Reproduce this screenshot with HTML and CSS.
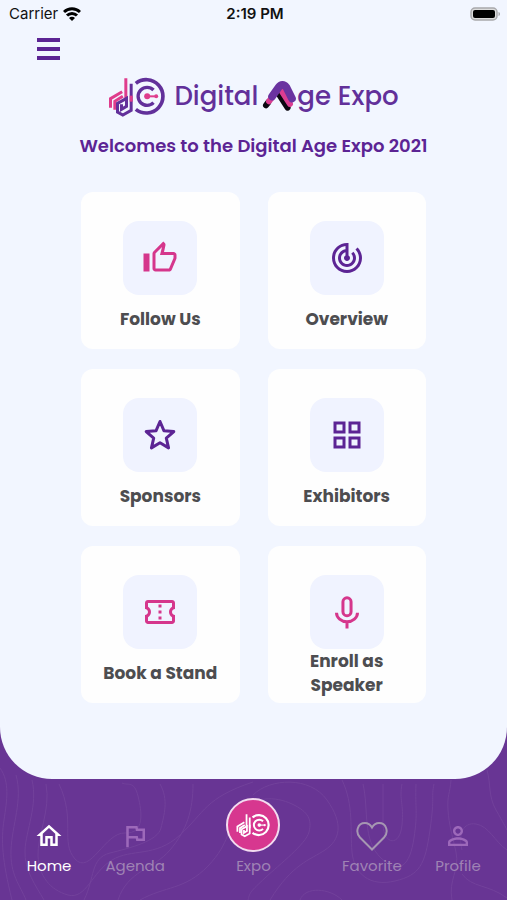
FILE: index.html
```html
<!DOCTYPE html>
<html lang="en">
<head>
    <meta charset="utf-8">
    <meta name="viewport" content="width=device-width, initial-scale=1">
    <title>Digital Age Expo</title>
    <link rel="stylesheet" href="styles.css">
</head>
<body>
    <!-- shared logo mark, coloured through css variables -->
    <svg class="defs" aria-hidden="true">
        <symbol id="mark" viewBox="26 22 176 120">
            <g fill="none" stroke-width="9">
                <path class="mark-b" d="M33 114V87L68 66M46 120V95L70 80M79 26V86"/>
                <path class="mark-a" d="M95 42V122L70 136L54 127V101L81 86V110L66 119V104"/>
                <path class="mark-b" d="M95 96V78"/>
                <path class="mark-a" d="M109 41A50 50 0 1 1 109 119" stroke-width="11"/>
                <path class="mark-a" d="M162 61A27 27 0 1 0 162 99" stroke-width="10"/>
                <path class="mark-b" d="M143 80H166" stroke-width="6"/>
            </g>
            <circle class="mark-dot" cx="143" cy="80" r="9"/>
            <circle class="mark-dot" cx="170" cy="80" r="6"/>
        </symbol>
    </svg>

    <div class="app">
        <svg class="contours" viewBox="0 0 507 200" preserveAspectRatio="none" aria-hidden="true">
            <path d="M0 68C10 82 7 100 4 120S2 160 12 200"/>
            <path d="M16 75C23 100 12 125 11 150S20 185 26 200"/>
            <path d="M32 80C38 105 26 130 25 150S36 186 44 200"/>
            <path d="M46 84C51 110 37 136 38 156S50 190 68 195S92 172 112 160S155 158 180 135S205 98 253 82"/>
            <path d="M59 84C76 120 60 142 75 159S105 132 125 133S142 112 138 96S128 86 122 83"/>
            <path d="M160 84C169 100 164 115 161 128S130 148 110 153S95 178 84 200"/>
            <path d="M193 84C193 110 187 130 170 150S128 170 118 200"/>
            <path d="M140 200C165 186 185 190 208 166S226 128 240 112S275 96 292 104S312 120 309 132S280 164 265 178S250 192 248 200"/>
            <path d="M253 95C270 78 310 76 327 100S340 140 325 150S292 164 270 200"/>
            <path d="M300 200C305 186 330 188 342 200"/>
            <path d="M342 80C354 105 350 130 352 152S370 187 395 181S425 165 430 130S431 98 434 84"/>
            <path d="M363 84C369 110 362 140 381 158S410 165 414 138S415 110 416 84"/>
            <path d="M383 84V125C384 145 400 147 402 125S399 100 402 84"/>
            <path d="M452 200C448 180 460 170 456 152S449 125 448 110S450 94 451 80"/>
            <path d="M487 70C491 84 488 96 496 110S505 126 507 130"/>
            <path d="M462 150C458 134 463 122 476 124S495 142 507 150"/>
            <path d="M462 174C472 188 488 184 507 198"/>
        </svg>

        <main class="panel">
            <div class="status">
                <span class="carrier">Carrier
                    <svg width="18" height="14" viewBox="0 0 18 14" fill="none" stroke="#000" stroke-width="3" aria-hidden="true">
                        <path d="M1 5a11.500 11.500 0 0 1 16 0M4 8.500a7 7 0 0 1 10 0"/>
                        <path d="M9 14L6 11a4 4 0 0 1 6 0z" fill="#000" stroke="none"/>
                    </svg>
                </span>
                <span class="time">2:19 PM</span>
                <svg class="battery" width="31" height="14" viewBox="0 0 31 14" aria-hidden="true">
                    <rect x="1" y="1" width="26" height="12" rx="4" fill="#dcdcdc" stroke="#a9a9ac" stroke-width="1.500"/>
                    <rect x="3" y="3" width="22" height="8" rx="2"/>
                    <path d="M28.500 5v4c2-.5 2-3.500 0-4z" fill="#a9a9ac"/>
                </svg>
            </div>

            <button class="menu" type="button" aria-label="Menu">
                <svg width="23" height="22" viewBox="0 0 23 22" aria-hidden="true">
                    <path d="M0 0h23v4H0zM0 9h23v4H0zM0 18h23v4H0z" fill="currentColor"/>
                </svg>
            </button>

            <div class="logo">
                <svg class="logo-mark" aria-hidden="true"><use href="#mark"/></svg>
                <span class="logo-word">Digital</span>
                <svg class="logo-a" viewBox="20 22 104 98" role="img" aria-label="A">
                    <g fill="none" stroke-linecap="round" stroke-linejoin="round">
                        <path stroke="#0b0710" stroke-width="18" d="M32 100L38 92M72 70L96 107"/>
                        <path stroke="#db3d91" stroke-width="18" d="M41 88L56 68M80 60L103 96"/>
                        <path stroke="#6a33a0" stroke-width="23" d="M50 74L69 47Q81 32 92 46L109 80"/>
                    </g>
                </svg>
                <span class="logo-word">ge Expo</span>
            </div>

            <h1 class="welcome">Welcomes to the Digital Age Expo 2021</h1>

            <div class="cards">
                <a class="card" href="#follow">
                    <span class="tile pink">
                        <svg viewBox="0 0 24 24" aria-hidden="true"><path d="M9 21h9c.83 0 1.540-.5 1.840-1.220l3.020-7.050c.09-.23.14-.47.14-.73v-2c0-1.100-.9-2-2-2h-6.310l.95-4.570.03-.32c0-.41-.17-.79-.44-1.060L14.170 1 7.580 7.590C7.220 7.950 7 8.450 7 9v10c0 1.100.9 2 2 2zM9 9l4.340-4.340L12 10h9v2l-3 7H9V9zM1 9h4v12H1z"/></svg>
                    </span>
                    <span class="label">Follow Us</span>
                </a>
                <a class="card" href="#overview">
                    <span class="tile">
                        <svg viewBox="0 0 24 24" aria-hidden="true"><path d="M19.070 4.930l-1.410 1.410C19.100 7.790 20 9.790 20 12c0 4.420-3.580 8-8 8s-8-3.580-8-8c0-4.080 3.050-7.440 7-7.930v2.020C8.160 6.570 6 9.030 6 12c0 3.310 2.690 6 6 6s6-2.690 6-6c0-1.660-.67-3.160-1.760-4.240l-1.410 1.410C15.550 9.900 16 10.900 16 12c0 2.210-1.790 4-4 4s-4-1.790-4-4c0-1.860 1.280-3.410 3-3.860v2.140c-.6.35-1 .98-1 1.720 0 1.100.9 2 2 2s2-.9 2-2c0-.74-.4-1.380-1-1.720V2h-1C6.480 2 2 6.480 2 12s4.480 10 10 10 10-4.480 10-10c0-2.760-1.120-5.260-2.930-7.070z"/></svg>
                    </span>
                    <span class="label">Overview</span>
                </a>
                <a class="card" href="#sponsors">
                    <span class="tile">
                        <svg class="line" viewBox="0 0 24 24" aria-hidden="true"><path stroke-linejoin="round" d="M12 3L14.600 9.100L21.200 9.700L16.200 14.100L17.700 20.600L12 17.200L6.300 20.600L7.800 14.100L2.800 9.700L9.400 9.100z"/></svg>
                    </span>
                    <span class="label">Sponsors</span>
                </a>
                <a class="card" href="#exhibitors">
                    <span class="tile">
                        <svg viewBox="0 0 24 24" aria-hidden="true"><path d="M3 3v8h8V3H3zm6 6H5V5h4v4zm-6 4v8h8v-8H3zm6 6H5v-4h4v4zm4-16v8h8V3h-8zm6 6h-4V5h4v4zm-6 4v8h8v-8h-8zm6 6h-4v-4h4v4z"/></svg>
                    </span>
                    <span class="label">Exhibitors</span>
                </a>
                <a class="card" href="#book">
                    <span class="tile pink">
                        <svg viewBox="0 0 24 24" aria-hidden="true"><path d="M22 10V6c0-1.110-.9-2-2-2H4c-1.100 0-1.990.89-1.990 2v4c1.100 0 1.990.9 1.990 2s-.89 2-2 2v4c0 1.100.9 2 2 2h16c1.100 0 2-.9 2-2v-4c-1.100 0-2-.9-2-2s.9-2 2-2zm-2-1.460c-1.190.69-2 1.990-2 3.460s.81 2.770 2 3.460V18H4v-2.540c1.190-.69 2-1.990 2-3.460 0-1.480-.8-2.770-1.990-3.460L4 6h16v2.540zM11 15h2v2h-2zm0-4h2v2h-2zm0-4h2v2h-2z"/></svg>
                    </span>
                    <span class="label">Book a Stand</span>
                </a>
                <a class="card" href="#enroll">
                    <span class="tile pink">
                        <svg class="line" viewBox="0 0 24 24" aria-hidden="true"><rect x="9.300" y="2.500" width="5.400" height="12" rx="2.700"/><path d="M5 12.500a7 6 0 0 0 14 0M12 18.500V23"/></svg>
                    </span>
                    <span class="label">Enroll as Speaker</span>
                </a>
            </div>
        </main>

        <nav class="tabs">
            <a class="tab active" href="#home">
                <svg viewBox="0 0 24 24" aria-hidden="true"><path d="M12 5.690l5 4.500V18h-2v-6H9v6H7v-7.810l5-4.500M12 3L2 12h3v8h6v-6h2v6h6v-8h3L12 3z"/></svg>
                <span>Home</span>
            </a>
            <a class="tab" href="#agenda">
                <svg viewBox="0 0 24 24" aria-hidden="true"><path d="M12.360 6l.4 2H18v6h-3.360l-.4-2H7V6h5.360M14 4H5v17h2v-7h5.600l.4 2h7V6h-5.600L14 4z"/></svg>
                <span>Agenda</span>
            </a>
            <a class="tab" href="#expo">
                <span class="round"><svg class="round-mark" aria-hidden="true"><use href="#mark"/></svg></span>
                <span>Expo</span>
            </a>
            <a class="tab" href="#favorite">
                <svg class="heart" viewBox="0 0 32 30" aria-hidden="true"><path d="M16 28.500L4 16.500C-1 11 1.500 2 9 2c3.500 0 5.500 2 7 4.500C17.500 4 19.500 2 23 2c7.500 0 10 9 5 14.500z"/></svg>
                <span>Favorite</span>
            </a>
            <a class="tab" href="#profile">
                <svg viewBox="0 0 24 24" aria-hidden="true"><path d="M12 5.900c1.160 0 2.100.94 2.100 2.100s-.94 2.100-2.100 2.100S9.900 9.160 9.900 8s.94-2.100 2.100-2.100m0 9c2.970 0 6.100 1.460 6.100 2.100v1.100H5.900V17c0-.64 3.130-2.100 6.100-2.100M12 4C9.790 4 8 5.790 8 8s1.790 4 4 4 4-1.790 4-4-1.790-4-4-4zm0 9c-2.670 0-8 1.340-8 4v3h16v-3c0-2.660-5.330-4-8-4z"/></svg>
                <span>Profile</span>
            </a>
        </nav>
    </div>
</body>
</html>
```

FILE: styles.css
```css
* { box-sizing: border-box; }
body { margin: 0; background: #683594; font-family: Poppins, Inter, sans-serif; }
a { color: inherit; text-decoration: none; }
svg { flex-shrink: 0; }
.defs { position: absolute; width: 0; height: 0; }

.app { position: relative; display: flex; flex-direction: column; min-height: 100vh; }
.contours { position: absolute; left: 0; bottom: 0; width: 100%; height: 200px; fill: none; stroke: #72419b; stroke-width: 1; }
.panel { position: relative; flex: 1; padding-bottom: 40px; background: #f2f6ff; border-radius: 0 0 52px 52px; }

/* status bar */
.status { display: grid; grid-template-columns: 1fr auto 1fr; align-items: center; height: 28px; padding: 0 6px 0 9px; font: 15px/20px Inter, sans-serif; color: #111; }
.carrier { display: flex; align-items: center; gap: 5px; }
.time { font-weight: 600; }
.battery { justify-self: end; }

.menu { display: block; margin: 4px 0 0 31px; padding: 6px; border: 0; background: none; color: #5c2494; line-height: 0; cursor: pointer; }

/* logo */
.logo { display: flex; justify-content: center; align-items: center; height: 40px; margin-top: 11px; color: #62309a; }
.logo-mark { width: 59px; height: 40px; margin-right: 7px; --a: #62309a; --b: #df3c8c; }
.logo-a { width: 35px; height: 33px; margin: 0 0 4px 4px; }
.logo-word { font-size: 26px; font-weight: 500; line-height: 36px; padding-bottom: 2px; white-space: nowrap; }
.mark-a { stroke: var(--a); }
.mark-b { stroke: var(--b); }
.mark-dot { fill: var(--b); }

.welcome { margin: 17px 0 0; font-size: 18px; font-weight: 600; line-height: 24px; text-align: center; color: #5c2494; }

/* cards */
.cards { display: grid; grid-template-columns: 1fr 1fr; gap: 20px 28px; width: 68%; margin: 34px auto 0; }
.card { display: flex; flex-direction: column; align-items: center; min-height: 157px; padding: 29px 16px 6px; background: #fefefe; border-radius: 12px; }
.tile { display: flex; align-items: center; justify-content: center; width: 74px; height: 74px; border-radius: 16px; background: #f0f3ff; color: #5c2494; }
.tile.pink { color: #d5368c; }
.tile svg { width: 36px; height: 36px; fill: currentColor; }
.tile .line { fill: none; stroke: currentColor; stroke-width: 2; }
.label { display: flex; flex: 1; align-items: center; max-width: 120px; font-size: 17px; font-weight: 700; line-height: 24px; text-align: center; color: #4d4d50; }

/* bottom tabs */
.tabs { position: relative; display: grid; grid-template-columns: 4fr 4fr 7fr 4fr 4fr; padding: 19px 6px 22px; }
.tab { display: flex; flex-direction: column; align-items: center; justify-content: flex-end; font-size: 15px; line-height: 24px; color: #9f83b4; }
.tab svg { width: 30px; height: 30px; margin-bottom: 3px; fill: #9d69ba; }
.tab.active { color: #fff; }
.tab.active svg { fill: #fff; }
.tab .heart { width: 32px; fill: none; stroke: #a697b2; stroke-width: 2; }
.round { display: flex; align-items: center; justify-content: center; width: 54px; height: 54px; margin-bottom: 2px; border: 2px solid #f3dcf0; border-radius: 50%; background: #d7378f; }
.round .round-mark { width: 35px; height: 25px; margin: 0; fill: #fff; --a: #fff; --b: #fff; }
```
